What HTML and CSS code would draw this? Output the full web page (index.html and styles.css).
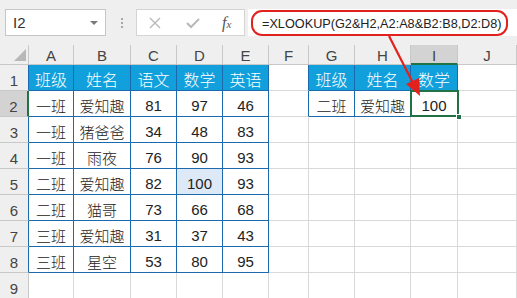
FILE: index.html
```html
<!DOCTYPE html>
<html lang="zh-CN">
<head>
  <meta charset="UTF-8" />
  <title>XLOOKUP 多条件查找</title>
  <link rel="stylesheet" href="styles.css">
</head>
<body>
  <div class="toolbar">
    <div class="namebox">
      <span>I2</span>
      <span class="caret"></span>
    </div>
    <div class="grip"><i></i><i></i><i></i></div>
    <div class="fxbox">
      <svg class="btn-x" width="12" height="12" viewBox="0 0 12 12"><path d="M1 1L11 11M11 1L1 11" stroke="#b9b9b9" stroke-width="1.4" fill="none"/></svg>
      <svg class="btn-ok" width="14" height="12" viewBox="0 0 14 12"><path d="M1 6L5 10L13 2" stroke="#b9b9b9" stroke-width="2" fill="none"/></svg>
      <span class="fx">f<small>x</small></span>
    </div>
    <div class="formula">
      <div class="ring">=XLOOKUP(G2&amp;H2,A2:A8&amp;B2:B8,D2:D8)</div>
    </div>
  </div>

  <div class="sheet">
    <div class="ch corner"><svg width="12" height="12" viewBox="0 0 12 12"><path d="M12 0L12 12L0 12Z" fill="#b8b8b8"/></svg></div>
    <div class="ch">A</div><div class="ch">B</div><div class="ch">C</div><div class="ch">D</div><div class="ch">E</div>
    <div class="ch">F</div><div class="ch">G</div><div class="ch">H</div><div class="ch act">I</div><div class="ch">J</div>

    <div class="rh bl">1</div>
    <div class="c th">班级</div><div class="c th">姓名</div><div class="c th">语文</div><div class="c th">数学</div><div class="c th">英语</div>
    <div class="c bl"></div>
    <div class="c th">班级</div><div class="c th">姓名</div><div class="c th">数学</div>
    <div class="c"></div>

    <div class="rh act">2</div>
    <div class="c t">一班</div><div class="c t">爱知趣</div><div class="c t">81</div><div class="c t">97</div><div class="c t">46</div>
    <div class="c bl"></div>
    <div class="c t">二班</div><div class="c t">爱知趣</div><div class="c t sel">100<span class="handle"></span></div>
    <div class="c"></div>

    <div class="rh bl">3</div>
    <div class="c t">一班</div><div class="c t">猪爸爸</div><div class="c t">34</div><div class="c t">48</div><div class="c t">83</div>
    <div class="c"></div><div class="c"></div><div class="c"></div><div class="c"></div><div class="c"></div>

    <div class="rh bl">4</div>
    <div class="c t">一班</div><div class="c t">雨夜</div><div class="c t">76</div><div class="c t">90</div><div class="c t">93</div>
    <div class="c"></div><div class="c"></div><div class="c"></div><div class="c"></div><div class="c"></div>

    <div class="rh bl">5</div>
    <div class="c t">二班</div><div class="c t">爱知趣</div><div class="c t">82</div><div class="c t hl">100</div><div class="c t">93</div>
    <div class="c"></div><div class="c"></div><div class="c"></div><div class="c"></div><div class="c"></div>

    <div class="rh bl">6</div>
    <div class="c t">二班</div><div class="c t">猫哥</div><div class="c t">73</div><div class="c t">66</div><div class="c t">68</div>
    <div class="c"></div><div class="c"></div><div class="c"></div><div class="c"></div><div class="c"></div>

    <div class="rh bl">7</div>
    <div class="c t">三班</div><div class="c t">爱知趣</div><div class="c t">31</div><div class="c t">37</div><div class="c t">43</div>
    <div class="c"></div><div class="c"></div><div class="c"></div><div class="c"></div><div class="c"></div>

    <div class="rh bl">8</div>
    <div class="c t">三班</div><div class="c t">星空</div><div class="c t">53</div><div class="c t">80</div><div class="c t">95</div>
    <div class="c"></div><div class="c"></div><div class="c"></div><div class="c"></div><div class="c"></div>

    <div class="rh">9</div>
    <div class="c"></div><div class="c"></div><div class="c"></div><div class="c"></div><div class="c"></div>
    <div class="c"></div><div class="c"></div><div class="c"></div><div class="c"></div><div class="c"></div>
  </div>

  <!-- 红色箭头：公式 -> 结果单元格 -->
  <svg class="arrow" width="517" height="298" viewBox="0 0 517 298">
    <line x1="389" y1="36" x2="413" y2="83" stroke="#e3211c" stroke-width="2.2"/>
    <path d="M420 96L406 84L419 78Z" fill="#e3211c"/>
  </svg>
</body>
</html>
```

FILE: styles.css
```css
:root {
  --bar: #efefef;
  --grid: #d9d9d9;
  --head-line: #c8c8c8;
  --blue: #12a0dd;
  --blue-line: #1b6aae;
  --green: #217346;
  --red: #e3211c;
}

* {
  box-sizing: border-box;
  margin: 0;
  padding: 0;
}

body {
  width: 517px;
  height: 298px;
  overflow: hidden;
  position: relative;
  background: #fff;
  font-family: "Liberation Sans", "Noto Sans CJK SC", sans-serif;
  color: #222;
}

/* 编辑栏 */
.toolbar {
  height: 45px;
  background: var(--bar);
  display: flex;
  align-items: flex-start;
  padding: 9px 0 0 5px;
}

.namebox {
  width: 101px;
  height: 27px;
  background: #fff;
  border: 1px solid #c6c6c6;
  display: flex;
  align-items: center;
  justify-content: space-between;
  padding: 0 7px 0 7px;
  font-size: 15px;
  color: #333;
}

.caret {
  width: 0;
  height: 0;
  border-left: 4px solid transparent;
  border-right: 4px solid transparent;
  border-top: 4px solid #7a7a7a;
}

.grip {
  display: flex;
  flex-direction: column;
  gap: 2px;
  margin: 9px 13px 0 15px;
}

.grip i {
  width: 2px;
  height: 2px;
  background: #a8a8a8;
}

.fxbox {
  width: 109px;
  height: 27px;
  background: #fff;
  border: 1px solid #d4d4d4;
  display: flex;
  align-items: center;
  padding-left: 12px;
}

.btn-ok {
  margin-left: 25px;
}

.fx {
  margin-left: 22px;
  font-family: "Liberation Serif", serif;
  font-style: italic;
  font-size: 16px;
  color: #555;
}

.fx small {
  font-size: 11px;
}

.formula {
  flex: 1;
  height: 27px;
  margin-left: 3px;
  background: #fff;
  padding: 1px 9px 0 3px;
}

.ring {
  height: 26px;
  border: 2px solid var(--red);
  border-radius: 11px;
  display: flex;
  align-items: center;
  padding: 1px 0 0 9px;
  font-size: 12.7px;
  color: #222;
  white-space: nowrap;
}

/* 工作表 */
.sheet {
  display: grid;
  grid-template-columns: 29px 45px 57px 46px 46px 46px 40px 46px 56px 47px 59px;
  grid-template-rows: 20px repeat(9, 26px);
}

.ch {
  background: var(--bar);
  border-right: 1px solid var(--head-line);
  border-bottom: 1px solid var(--head-line);
  display: flex;
  align-items: center;
  justify-content: center;
  padding-top: 2px;
  font-size: 15px;
  color: #444;
}

.ch.corner {
  align-items: flex-end;
  justify-content: flex-end;
  padding: 0 2px 3px 0;
}

.ch.act {
  background: #d3d3d3;
  border-bottom: 2px solid var(--green);
}

.rh {
  background: var(--bar);
  border-right: 1px solid var(--head-line);
  border-bottom: 1px solid var(--head-line);
  display: flex;
  align-items: center;
  justify-content: center;
  padding-top: 6px;
  font-size: 15px;
  color: #444;
}

.rh.act {
  background: #d3d3d3;
  border-right: 2px solid var(--green);
}

.c {
  border-right: 1px solid var(--grid);
  border-bottom: 1px solid var(--grid);
  display: flex;
  align-items: center;
  justify-content: center;
  padding-top: 3px;
  font-size: 15px;
  font-weight: 300;
  position: relative;
}

.bl {
  border-right-color: var(--blue-line);
}

.th {
  background: var(--blue);
  color: #fff;
  font-size: 16px;
  border-right-color: var(--blue-line);
  border-bottom-color: var(--blue-line);
}

.t {
  border-right-color: var(--blue-line);
  border-bottom-color: var(--blue-line);
}

.hl {
  background: #dde9f6;
}

.sel::after {
  content: "";
  position: absolute;
  inset: -1px -2px -1px -1px;
  border: 2px solid var(--green);
}

.handle {
  position: absolute;
  right: -5px;
  bottom: -4px;
  width: 6px;
  height: 6px;
  background: var(--green);
  border: 1px solid #fff;
  z-index: 1;
}

.arrow {
  position: absolute;
  left: 0;
  top: 0;
  pointer-events: none;
}
```
